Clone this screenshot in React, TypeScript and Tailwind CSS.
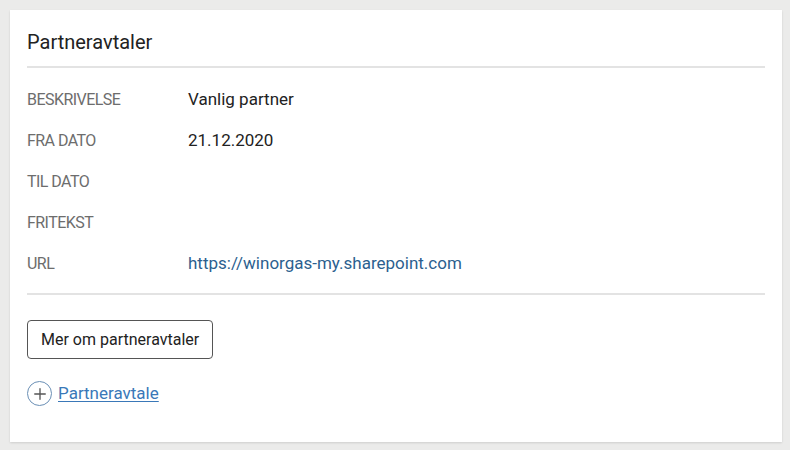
import { Plus } from "lucide-react";

const rows: { label: string; value?: string; href?: boolean }[] = [
  { label: "BESKRIVELSE", value: "Vanlig partner" },
  { label: "FRA DATO", value: "21.12.2020" },
  { label: "TIL DATO" },
  { label: "FRITEKST" },
  { label: "URL", value: "https://winorgas-my.sharepoint.com", href: true },
];

export default function App() {
  return (
    <div
      className="h-[450px] w-[790px] bg-[#ebebea] p-[10px] pr-[8px] pb-[8px]"
      style={{ fontFamily: "Roboto, 'Noto Sans', sans-serif" }}
    >
      <div className="h-[432px] bg-white px-[17px] pt-[20px] shadow-[0_1px_2px_rgba(0,0,0,0.12)]">
        <h2 className="text-[20px] leading-[24px] text-[#222]">Partneravtaler</h2>
        <div className="mt-3 h-[2px] bg-[#e3e3e3]" />

        {/* Details */}
        <div className="mt-[11px]">
          {rows.map((r) => (
            <div key={r.label} className="flex h-[41px] items-center">
              <span className="w-[161px] text-[16px] tracking-[-0.55px] text-[#6d6d6d]">
                {r.label}
              </span>
              {r.value &&
                (r.href ? (
                  <a href="#" className="text-[17px] text-[#2c5f8f]">
                    {r.value}
                  </a>
                ) : (
                  <span className="text-[17px] text-[#222]">{r.value}</span>
                ))}
            </div>
          ))}
        </div>

        <div className="mt-[9px] h-[2px] bg-[#e3e3e3]" />

        <button className="mt-[25px] h-[39px] rounded-[4px] border-[1.5px] border-[#555] px-[13px] text-[16px] text-[#222]">
          Mer om partneravtaler
        </button>

        <div className="mt-[22px] flex items-center gap-[6px]">
          <span className="flex h-[25px] w-[25px] items-center justify-center rounded-full border-[1.5px] border-[#6a8fb5]">
            <Plus size={18} strokeWidth={1.8} className="text-[#555]" />
          </span>
          <a href="#" className="text-[17px] text-[#3a78b8] underline underline-offset-2">
            Partneravtale
          </a>
        </div>
      </div>
    </div>
  );
}
